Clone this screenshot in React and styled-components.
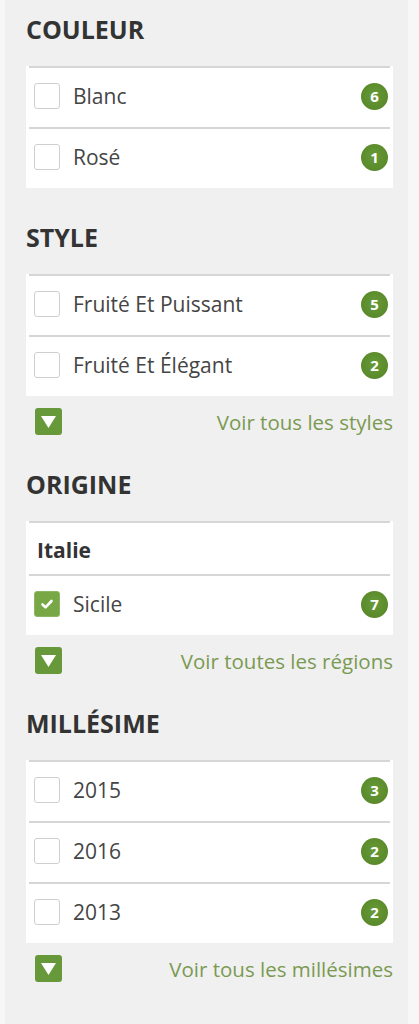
import React from "react";
import styled, { createGlobalStyle } from "styled-components";

const Global = createGlobalStyle`
  html, body { margin: 0; padding: 0; background: #f7f7f7; }
  body { font-family: "Open Sans", "Noto Sans", sans-serif; }
`;

const Panel = styled.div`
  margin-left: 5px;
  width: 403px;
  min-height: 1024px;
  box-sizing: border-box;
  background: #f0f0f0;
  padding: 14px 15px 20px 21px;
`;

const Section = styled.section`
  & + & { margin-top: 34px; }
`;

const Heading = styled.h2`
  margin: 0 0 22px;
  font-size: 25px;
  line-height: 30px;
  font-weight: 700;
  color: #333;
`;

const Card = styled.div`
  background: #fff;
  padding: 0 3px;
`;

const Row = styled.div`
  display: flex;
  align-items: center;
  box-sizing: border-box;
  border-top: 2px solid #d6d6d6;
  height: ${(p) => (p.$group ? 53 : 61)}px;
  padding: ${(p) => (p.$group ? "3px 2px 0 8px" : "0 2px 3px 5px")};
`;

const GroupTitle = styled.span`
  font-size: 21px;
  font-weight: 700;
  color: #333;
`;

const Box = styled.span`
  width: 26px;
  height: 26px;
  box-sizing: border-box;
  border-radius: 3px;
  flex: none;
  display: flex;
  align-items: center;
  justify-content: center;
  border: 1px solid ${(p) => (p.$checked ? "#8cb663" : "#cfcfcf")};
  background: ${(p) => (p.$checked ? "#78a846" : "#fff")};
`;

const Label = styled.span`
  margin-left: 13px;
  font-size: 21px;
  color: #454545;
  flex: 1;
`;

const Badge = styled.span`
  width: 27px;
  height: 27px;
  border-radius: 50%;
  background: radial-gradient(circle at 50% 45%, #689a37 0%, #5a8a2b 70%, #4f7d24 100%);
  color: #fff;
  font-size: 15px;
  font-weight: 700;
  display: flex;
  align-items: center;
  justify-content: center;
  flex: none;
`;

const MoreRow = styled.div`
  display: flex;
  align-items: center;
  justify-content: space-between;
  margin: 12px 0 2px;
  height: 27px;
  padding-left: 9px;
`;

const Toggle = styled.span`
  width: 27px;
  height: 27px;
  border-radius: 3px;
  background: #67993a;
  display: flex;
  align-items: center;
  justify-content: center;
`;

const MoreLink = styled.a`
  font-size: 20.5px;
  color: #7a9a52;
  text-decoration: none;
`;

const Check = () => (
  <svg width="16" height="16" viewBox="0 0 16 16">
    <path d="M3.5 8.5 L6.5 11.3 L12.5 5" fill="none" stroke="#fff" strokeWidth="2.6" strokeLinecap="round" strokeLinejoin="round" />
  </svg>
);

const Down = () => (
  <svg width="17" height="15" viewBox="0 0 17 15">
    <path d="M1 2 H16 L8.5 14 Z" fill="#fff" />
  </svg>
);

const sections = [
  {
    title: "COULEUR",
    items: [
      { label: "Blanc", count: 6 },
      { label: "Rosé", count: 1 },
    ],
  },
  {
    title: "STYLE",
    items: [
      { label: "Fruité Et Puissant", count: 5 },
      { label: "Fruité Et Élégant", count: 2 },
    ],
    more: "Voir tous les styles",
  },
  {
    title: "ORIGINE",
    group: "Italie",
    items: [{ label: "Sicile", count: 7, checked: true }],
    more: "Voir toutes les régions",
  },
  {
    title: "MILLÉSIME",
    items: [
      { label: "2015", count: 3 },
      { label: "2016", count: 2 },
      { label: "2013", count: 2 },
    ],
    more: "Voir tous les millésimes",
  },
];

export default function App() {
  return (
    <>
      <Global />
      <Panel>
        {sections.map((s) => (
          <Section key={s.title}>
            <Heading>{s.title}</Heading>
            <Card>
              {s.group && (
                <Row $group>
                  <GroupTitle>{s.group}</GroupTitle>
                </Row>
              )}
              {s.items.map((it) => (
                <Row key={it.label}>
                  <Box $checked={it.checked}>{it.checked && <Check />}</Box>
                  <Label>{it.label}</Label>
                  <Badge>{it.count}</Badge>
                </Row>
              ))}
            </Card>
            {s.more && (
              <MoreRow>
                <Toggle>
                  <Down />
                </Toggle>
                <MoreLink href="#">{s.more}</MoreLink>
              </MoreRow>
            )}
          </Section>
        ))}
      </Panel>
    </>
  );
}
